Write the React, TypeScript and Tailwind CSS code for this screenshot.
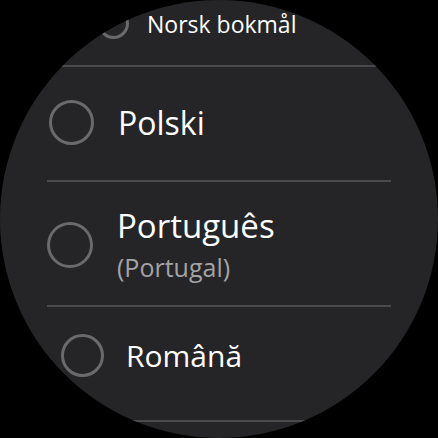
const font = { fontFamily: '"Open Sans", "Roboto", sans-serif' };

function Radio({ size }: { size: string }) {
  return <span className={`${size} shrink-0 rounded-full border-[3px] border-[#6a6a6c]`} />;
}

function Divider({ className }: { className: string }) {
  return <div className={`h-[2px] shrink-0 bg-[#4a4a4c] ${className}`} />;
}

export default function App() {
  return (
    <div className="flex h-[438px] w-[438px] bg-black" style={font}>
      <div className="flex h-[438px] w-[438px] flex-col overflow-hidden rounded-full bg-[#252527]">
        <div className="flex h-[65px] shrink-0 items-start gap-[18px] pl-[98px] pt-[8px]">
          <Radio size="h-[31px] w-[31px]" />
          <span className="mt-[3px] text-[23px] leading-[26px] text-white">Norsk bokmål</span>
        </div>
        <Divider className="mx-[47px]" />
        <div className="flex h-[113px] shrink-0 items-center gap-[24px] pl-[49px] pb-[2px]">
          <Radio size="h-[45px] w-[45px]" />
          <span className="text-[32px] leading-[36px] text-white">Polski</span>
        </div>
        <Divider className="mx-[47px]" />
        <div className="flex h-[123px] shrink-0 items-center gap-[24px] pl-[47px] pt-[2px]">
          <Radio size="h-[46px] w-[46px]" />
          <div className="flex flex-col">
            <span className="text-[33px] leading-[34px] text-white">Português</span>
            <span className="mt-[10px] text-[25px] leading-[28px] text-[#a3a3a5]">(Portugal)</span>
          </div>
        </div>
        <Divider className="mx-[47px]" />
        <div className="flex h-[113px] shrink-0 items-center gap-[22px] pl-[61px] pb-[16px]">
          <Radio size="h-[43px] w-[43px]" />
          <span className="text-[30px] leading-[34px] text-white">Română</span>
        </div>
        <Divider className="mx-[47px]" />
      </div>
    </div>
  );
}
